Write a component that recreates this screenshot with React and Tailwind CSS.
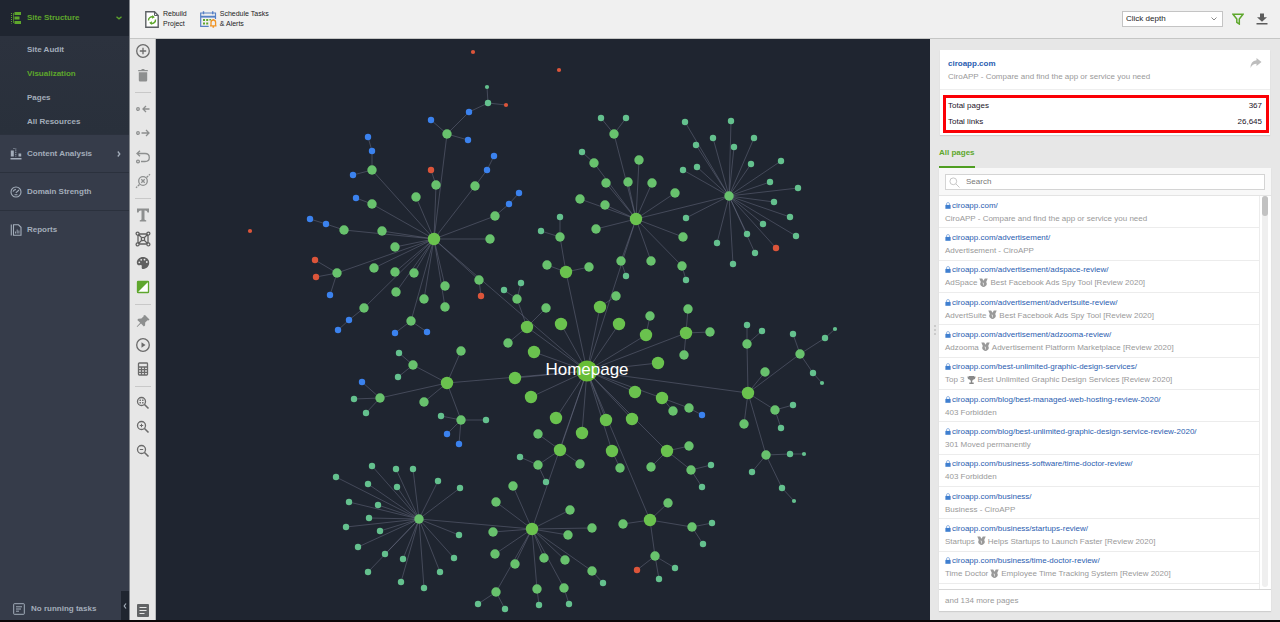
import { useMemo, useState } from 'react'

// kind -> radius and fill; h is the home node, 1-4 are click depths, b redirects, r errors
const KINDS = {
  h: { r: 10.5, fill: '#68bd37' },
  1: { r: 6.2, fill: '#6ac24e' },
  2: { r: 4.7, fill: '#68c26d' },
  3: { r: 3.2, fill: '#64c18e' },
  4: { r: 2.1, fill: '#64c18e' },
  b: { r: 3.2, fill: '#3b82ee' },
  r: { r: 3.2, fill: '#dc553a' },
  e: { r: 2.1, fill: '#dc553a' }
}

const n = (x, y, kind, ...children) => ({ x, y, kind, children })
const leaves = (kind, points) => points.map(([x, y]) => n(x, y, kind))

const siteTree = n(587, 371, 'h',
  ...leaves(1, [[534, 352], [515, 378], [531, 397], [561, 324], [556, 418], [582, 433], [619, 324], [658, 363], [635, 392], [632, 419], [606, 420]]),
  n(434, 239, 1,
    ...leaves(2, [[382, 231], [395, 247], [416, 197], [490, 239], [374, 268], [395, 272], [414, 273], [396, 292], [424, 299], [445, 286], [445, 307]]),
    n(447, 134, 2, n(431, 120, 'b'), n(468, 140, 'b'), n(469, 112, 'b', n(488, 103, 3, n(487, 87, 4), n(506, 105, 'e')))),
    n(372, 170, 2, n(372, 151, 'b', n(368, 137, 'b')), n(353, 175, 'b')),
    n(372, 204, 2, n(356, 198, 'b')),
    n(344, 230, 2, n(326, 224, 'b', n(310, 219, 'b'))),
    n(436, 185, 2, n(431, 170, 'r')),
    n(475, 186, 2, n(487, 170, 'b', n(494, 156, 'b'))),
    n(495, 216, 2, n(509, 204, 'b', n(519, 193, 'b'))),
    n(337, 273, 2, n(315, 260, 'r'), n(316, 277, 'r'), n(330, 295, 'b')),
    n(364, 308, 2, n(349, 320, 'b', n(338, 330, 'b'))),
    n(411, 321, 2, n(395, 333, 'b'), n(427, 332, 'b')),
    n(479, 280, 2, n(481, 296, 'r'))
  ),
  n(527, 327, 1, n(517, 299, 2, ...leaves(3, [[504, 290], [521, 283]])), n(546, 308, 2), n(508, 343, 2)),
  n(447, 383, 1,
    n(461, 351, 2),
    n(424, 402, 2),
    n(413, 365, 2, ...leaves(3, [[399, 353], [398, 377]])),
    n(380, 398, 2, n(362, 382, 'b'), ...leaves(3, [[354, 399], [366, 413]])),
    n(461, 420, 2, ...leaves(3, [[441, 416], [486, 420]]), n(447, 434, 'b'), n(459, 444, 'b'))
  ),
  n(636, 219, 1,
    ...leaves(2, [[639, 160], [606, 183], [628, 182], [652, 183], [675, 193], [580, 199], [605, 205], [596, 229], [683, 237], [651, 261]]),
    n(614, 134, 2, ...leaves(3, [[601, 118], [626, 118]])),
    n(594, 163, 2, n(582, 152, 3)),
    n(621, 261, 2, n(626, 276, 3)),
    n(682, 266, 2, n(686, 280, 3)),
    n(729, 196, 2,
      ...leaves(3, [[685, 122], [731, 121], [713, 138], [754, 138], [696, 145], [734, 147], [683, 170], [697, 167], [751, 164], [781, 161], [770, 182], [798, 188], [774, 202], [790, 217], [763, 224], [796, 236], [747, 234], [755, 253], [686, 218], [717, 243], [733, 264]]),
      n(776, 248, 'r')
    )
  ),
  n(566, 272, 1, n(547, 265, 2), n(589, 267, 2), n(560, 237, 2, ...leaves(3, [[560, 217], [541, 231]]))),
  n(600, 307, 1, n(616, 296, 2)),
  n(646, 335, 1, n(650, 316, 2)),
  n(686, 333, 1, ...leaves(2, [[688, 309], [710, 332], [684, 355]])),
  n(662, 398, 1, n(673, 411, 2), n(689, 408, 2, n(702, 415, 'b'))),
  n(612, 451, 1, n(620, 468, 2)),
  n(667, 451, 1, n(689, 446, 2), n(651, 467, 2), n(691, 470, 2, ...leaves(3, [[711, 465], [702, 487]]))),
  n(560, 450, 1, n(538, 434, 2), n(580, 464, 2), n(538, 465, 2, ...leaves(3, [[520, 457], [546, 482]]))),
  n(748, 393, 1,
    n(765, 372, 2),
    n(744, 424, 2),
    n(747, 344, 2, ...leaves(3, [[747, 325], [762, 331]])),
    n(800, 354, 2, n(793, 334, 3), n(825, 338, 3, n(835, 329, 4)), n(813, 373, 3, n(822, 383, 4))),
    n(775, 410, 2, ...leaves(3, [[793, 405], [781, 428]])),
    n(766, 455, 2, n(752, 472, 3), n(790, 454, 3, n(804, 454, 4)), n(782, 488, 3, n(794, 501, 4)))
  ),
  n(532, 529, 1,
    ...leaves(2, [[513, 486], [496, 502], [493, 532], [495, 554], [515, 564], [544, 558], [565, 560], [568, 535], [592, 528], [570, 510]]),
    n(592, 571, 2, n(603, 583, 3)),
    n(496, 592, 2, ...leaves(3, [[478, 604], [505, 609]])),
    n(537, 589, 2, n(539, 605, 3)),
    n(564, 588, 2, n(569, 604, 3)),
    n(419, 519, 2,
      ...leaves(3, [[372, 466], [396, 469], [413, 469], [336, 477], [368, 484], [397, 487], [438, 481], [460, 488], [349, 502], [378, 505], [369, 518], [346, 527], [380, 531], [358, 547], [385, 554], [403, 559], [368, 572], [401, 582], [424, 588], [440, 572], [454, 558], [459, 535]])
    )
  ),
  n(650, 520, 1,
    n(668, 503, 2),
    n(623, 524, 2),
    n(692, 527, 2, ...leaves(3, [[712, 523], [703, 544]])),
    n(655, 556, 2, n(637, 570, 'r'), ...leaves(3, [[659, 579], [675, 568]]))
  )
)

const orphans = leaves('e', [[473, 52], [559, 70], [250, 231]])

const pages = [
  { url: 'ciroapp.com/', title: ['CiroAPP - Compare and find the app or service you need'] },
  { url: 'ciroapp.com/advertisement/', title: ['Advertisement - CiroAPP'] },
  { url: 'ciroapp.com/advertisement/adspace-review/', title: ['AdSpace', 'Best Facebook Ads Spy Tool [Review 2020]'], icon: 'medal' },
  { url: 'ciroapp.com/advertisement/advertsuite-review/', title: ['AdvertSuite', 'Best Facebook Ads Spy Tool [Review 2020]'], icon: 'medal' },
  { url: 'ciroapp.com/advertisement/adzooma-review/', title: ['Adzooma', 'Advertisement Platform Marketplace [Review 2020]'], icon: 'medal' },
  { url: 'ciroapp.com/best-unlimited-graphic-design-services/', title: ['Top 3', 'Best Unlimited Graphic Design Services [Review 2020]'], icon: 'trophy' },
  { url: 'ciroapp.com/blog/best-managed-web-hosting-review-2020/', title: ['403 Forbidden'] },
  { url: 'ciroapp.com/blog/best-unlimited-graphic-design-service-review-2020/', title: ['301 Moved permanently'] },
  { url: 'ciroapp.com/business-software/time-doctor-review/', title: ['403 Forbidden'] },
  { url: 'ciroapp.com/business/', title: ['Business - CiroAPP'] },
  { url: 'ciroapp.com/business/startups-review/', title: ['Startups', 'Helps Startups to Launch Faster [Review 2020]'], icon: 'medal' },
  { url: 'ciroapp.com/business/time-doctor-review/', title: ['Time Doctor', 'Employee Time Tracking System [Review 2020]'], icon: 'medal' }
]

const flatten = (node, nodes = [], edges = []) => {
  nodes.push(node)
  node.children.forEach((child) => {
    edges.push([node, child])
    flatten(child, nodes, edges)
  })
  return { nodes, edges }
}

const Magnifier = ({ children }) => (
  <>
    <circle cx="6.5" cy="6.5" r="4" />
    <path d="M9.5 9.5l4 4" strokeWidth="1.6" />
    {children}
  </>
)

// every tool is drawn on a 16x16 grid with a currentColor stroke
const toolGroups = [
  [
    { label: 'Add page', tone: 'text-[#6b6b6b]', art: <><circle cx="8" cy="8" r="6.3" /><path d="M8 4.8v6.4M4.8 8h6.4" /></> },
    { label: 'Delete', tone: 'text-[#8d8f8f]', art: <path d="M3.200 4.300V2.900h3l.7-.9h2.200l.7.9h3v1.400zM3.800 5.300h8.400v8q0 1.200-1.200 1.200H5q-1.200 0-1.200-1.200z" fill="currentColor" stroke="none" /> }
  ],
  [
    { label: 'Incoming links', tone: 'text-[#8d8f8f]', art: <><circle cx="3" cy="8" r="1.300" /><path d="M14.500 8H8M11 5L8 8l3 3" /></> },
    { label: 'Outgoing links', tone: 'text-[#8d8f8f]', art: <><circle cx="3" cy="8" r="1.300" /><path d="M6.500 8H14M11 5l3 3-3 3" /></> },
    { label: 'Redirect link', tone: 'text-[#8d8f8f]', art: <><path d="M5 1.800L2 4.500l3 2.700M2.300 4.500h7.700q4.300 0 4.300 4t-4.300 4H6" /><circle cx="3" cy="12.500" r="1.400" /></> },
    { label: 'Break links', tone: 'text-[#8d8f8f]', art: <><circle cx="8" cy="8" r="4.300" /><path d="M6.300 6.300l3.400 3.400M9.700 6.300L6.300 9.700" /><path d="M11.500 4.500L15 1.200M4.500 11.500L1 14.800" strokeDasharray="2.300 .8" /></> }
  ],
  [
    { label: 'Titles', tone: 'text-[#8d8f8f]', art: <path d="M2 1.500h12v4h-1.500q-.3-2-2.300-2H9.500v8.700q0 1 1.700 1v1.300H4.800v-1.300q1.700 0 1.700-1V3.500h-.7q-2 0-2.300 2H2z" fill="currentColor" stroke="none" /> },
    { label: 'Layout', tone: 'text-[#606060]', art: <><path d="M3 3h10v10H3zM3 3l10 10M13 3L3 13" /><g fill="#e7e7e7"><circle cx="2.600" cy="2.600" r="1.500" /><circle cx="13.400" cy="2.600" r="1.500" /><circle cx="2.600" cy="13.400" r="1.500" /><circle cx="13.400" cy="13.400" r="1.500" /><circle cx="8" cy="8" r="1.700" /></g></> },
    { label: 'Colors', tone: 'text-[#606060]', art: <><path d="M8 2C4.500 2 1.800 4.500 1.800 7.500c0 2.500 1.700 3 3.200 2.700 1.700-.4 2 .3 1.700 1.800-.2 1.500.5 2.200 1.700 2 3.500-.5 5.800-3 5.800-6.300C14.200 4.300 11.500 2 8 2z" fill="currentColor" stroke="none" /><g fill="#e7e7e7" stroke="none"><circle cx="4.300" cy="7.300" r=".9" /><circle cx="6.200" cy="4.800" r=".9" /><circle cx="9.500" cy="4.600" r=".9" /><circle cx="11.800" cy="7" r=".9" /></g></> },
    { label: 'Background', tone: 'text-[#5ea62d]', art: <><rect x="2.500" y="2.500" width="11" height="11" rx=".6" fill="#fff" /><path d="M2.500 2.500h11l-11 11z" fill="currentColor" stroke="none" /></> }
  ],
  [
    { label: 'Pin', tone: 'text-[#8d8f8f]', art: <path d="M9.700 1.800l4.500 4.500-1 .8-.9-.2-2.400 2.300-.1 3-1.300 1-2.800-2.900-3.800 3.500-.5-.5 3.500-3.800L2 6.700l1-1.300 3.100-.1 2.300-2.300-.2-.7z" transform="translate(.3 .3)" fill="currentColor" stroke="none" /> },
    { label: 'Play', tone: 'text-[#6b6b6b]', art: <><circle cx="8" cy="8" r="6.300" /><path d="M6.500 5.300L10.500 8l-4 2.700z" fill="currentColor" stroke="none" /></> },
    { label: 'Calculate', tone: 'text-[#6b6b6b]', art: <><rect x="3.500" y="2" width="9" height="12" rx=".8" /><path d="M3.500 6h9M3.500 8.700h9M3.500 11.300h9M6.500 6v8M9.500 6v8" /></> }
  ],
  [
    { label: 'Fit to screen', tone: 'text-[#6b6b6b]', art: <Magnifier><g fill="currentColor" stroke="none"><path d="M4.500 4.500h1.400v1.400H4.500zM7.100 4.500h1.400v1.400H7.100zM4.500 7.100h1.400v1.400H4.500zM7.100 7.100h1.400v1.400H7.100z" /></g></Magnifier> },
    { label: 'Zoom in', tone: 'text-[#6b6b6b]', art: <Magnifier><path d="M6.500 4.800v3.400M4.800 6.500h3.400" strokeWidth="1" /></Magnifier> },
    { label: 'Zoom out', tone: 'text-[#6b6b6b]', art: <Magnifier><path d="M4.800 6.500h3.400" strokeWidth="1" /></Magnifier> }
  ]
]

const Medal = () => (
  <svg viewBox="0 0 9 10" className="mx-[2px] h-[10px] w-[9px] shrink-0 fill-[#999]" aria-hidden="true">
    <path d="M.3.600h2.900l1.300 2.200L5.800.600h2.900L7.200 3.900a3.200 3.200 0 1 1-5.400 0z" />
    <path d="M3.500 5h1v2.500" fill="none" stroke="#eee" strokeWidth=".7" />
  </svg>
)

const Trophy = () => (
  <svg viewBox="0 0 9 10" className="mx-[2px] h-[10px] w-[9px] shrink-0 fill-[#888]" aria-hidden="true">
    <path d="M2 1h5v.6h1.500c0 1.900-.6 2.800-2 3L5.200 5.800v1.800h1.500V9H2.300V7.600h1.500V5.800L2.500 4.600c-1.400-.2-2-1.100-2-3H2z" />
  </svg>
)

const Lock = () => (
  <svg viewBox="0 0 6 7" className="h-[7px] w-[6px] shrink-0" aria-hidden="true">
    <path d="M1.500 3V2a1.500 1.500 0 0 1 3 0v1" fill="none" stroke="#8eb2e2" strokeWidth=".9" />
    <rect x=".4" y="2.900" width="5.200" height="3.900" fill="#3f7fd0" />
  </svg>
)

function Sidebar() {
  const [active, setActive] = useState('Visualization')

  return (
    <aside className="flex w-[130px] shrink-0 flex-col border-r border-[#82868c] bg-[#363c4a] font-bold text-[#a3adba]">
      <nav className="flex flex-col">
        <button className="flex h-9 items-center bg-[#1f2530] pr-[7px] pl-[10px] text-[#5ea72c]">
          <svg viewBox="0 0 12 12" className="mr-[5px] size-3" fill="currentColor" aria-hidden="true">
            <path d="M1.500 1v10.500" stroke="currentColor" strokeDasharray="1 1" />
            <path d="M4.500 0H11v3H4.500zM4.500 4.500h5v3h-5zM4.500 9H11v3H4.500z" />
            <path d="M3.500 1v10" stroke="currentColor" strokeWidth=".7" />
          </svg>
          Site Structure
          <svg viewBox="0 0 6 4" className="ml-auto h-1 w-[6px]" fill="none" stroke="currentColor" strokeWidth="1.3" aria-hidden="true">
            <path d="M.5.8L3 2.800 5.500.8" />
          </svg>
        </button>
        <div className="flex flex-col bg-linear-to-b from-[#2c323e] to-[#29303b] pt-[2px]">
          {['Site Audit', 'Visualization', 'Pages', 'All Resources'].map((item) => (
            <button key={item} onClick={() => setActive(item)} className={`flex h-6 items-center pl-[27px] ${active === item ? 'text-[#5ea72c]' : ''}`}>
              {item}
            </button>
          ))}
        </div>
        <button className="flex h-[38px] items-center border-t border-[#2b313d] pr-2 pl-[10px]">
          <svg viewBox="0 0 12 12" className="mr-[5px] size-3" fill="currentColor" aria-hidden="true">
            <path d="M.8 2.500h3v6h-3zM8.500 5.500h2.700v3H8.500z" />
            <path d="M5.800.5v8M3.500.5h1" stroke="currentColor" strokeDasharray="1 .8" />
            <path d="M.5 10h11v1.500H.5z" />
          </svg>
          Content Analysis
          <svg viewBox="0 0 4 6" className="ml-auto h-[6px] w-1" fill="none" stroke="currentColor" strokeWidth="1.3" aria-hidden="true">
            <path d="M.8.500L2.800 3 .8 5.500" />
          </svg>
        </button>
        <button className="flex h-[38px] items-center border-t border-[#2b313d] pl-[10px]">
          <svg viewBox="0 0 12 12" className="mr-[5px] size-3" fill="none" stroke="currentColor" strokeWidth="1.1" aria-hidden="true">
            <circle cx="6" cy="6" r="5" />
            <path d="M3 5.500q1-2 3-2M5.800 6.800L9 4M4.500 8.800h3" />
          </svg>
          Domain Strength
        </button>
        <button className="flex h-[38px] items-center border-t border-[#2b313d] pl-[10px]">
          <svg viewBox="0 0 12 12" className="mr-[5px] size-3" fill="none" stroke="currentColor" strokeWidth="1.1" aria-hidden="true">
            <path d="M1.300.5v11M3.500.8h5l2.500 2.500v7.900H3.500z" />
            <path d="M5.500 9.500v-2M7.200 9.500v-4M8.900 9.500v-3" strokeWidth=".9" />
          </svg>
          Reports
        </button>
      </nav>
      <div className="mt-auto flex h-[29px] items-stretch">
        <button className="flex flex-1 items-center pt-[6px] pl-[13px]">
          <svg viewBox="0 0 12 12" className="mr-[6px] size-3" fill="none" stroke="currentColor" aria-hidden="true">
            <rect x=".7" y=".7" width="10.600" height="10.600" rx=".6" />
            <path d="M3 3.800h6M3 6h5M3 8.200h3" />
          </svg>
          No running tasks
        </button>
        <button aria-label="Collapse menu" className="flex w-2 items-center justify-center bg-[#1f2530]">
          <svg viewBox="0 0 4 6" className="h-[6px] w-1" fill="none" stroke="currentColor" strokeWidth="1.2" aria-hidden="true">
            <path d="M3 .5L1.200 3 3 5.500" />
          </svg>
        </button>
      </div>
    </aside>
  )
}

function Header() {
  return (
    <header className="flex h-[39px] shrink-0 items-center border-b border-[#c5c6c5] bg-[#f0f0f0] pr-3 pl-[15px] text-[#1c1c24]">
      <button className="flex items-center gap-1 text-left text-[7px] leading-[10px]">
        <svg viewBox="0 0 14 17" className="h-[17px] w-[14px]" fill="none" aria-hidden="true">
          <path d="M.8.800h8.700l3.700 3.700v11.700H.8z" fill="#fff" stroke="#5c6064" strokeWidth="1.400" />
          <path d="M9.500.800v3.700h3.700" stroke="#5c6064" />
          <path d="M3.500 9.500a3.500 3.500 0 0 1 4.700-3.500M10.500 8.500a3.500 3.500 0 0 1-4.700 3.700" stroke="#5ea72c" strokeWidth="1.400" />
          <path d="M7.300 4l2.500 2.300-2.800 1.500zM6.700 14L4.200 11.700 7 10.200z" fill="#5ea72c" />
        </svg>
        <span>Rebuild<br />Project</span>
      </button>
      <button className="ml-[13px] flex items-center gap-[3px] text-left text-[7px] leading-[10px]">
        <svg viewBox="0 0 17 17" className="size-[17px]" fill="none" aria-hidden="true">
          <path d="M.7 2h14.800v4H.7zM.7 6v9.300h8M15.500 6v2" stroke="#5580c4" strokeWidth="1.200" />
          <path d="M3.500.3v3M12.700.3v3M.7 5.500h14.800" stroke="#5580c4" strokeWidth="1.400" />
          <path d="M3 8h2v2H3zM6.200 8h2v2h-2zM9.400 8h1.500v1.500H9.400zM3 11.500h2v2H3zM6.200 11.500h2v2h-2z" fill="#5ea72c" />
          <path d="M10 14.800h6.500M11 14.500v-3q0-2.500 2.300-2.500t2.300 2.500v3M12.500 16h1.600M13.300 9V8" stroke="#f09424" strokeWidth="1.300" />
        </svg>
        <span>Schedule Tasks<br />&amp; Alerts</span>
      </button>
      <div className="relative ml-auto flex">
        <select aria-label="Node size" className="h-4 w-[101px] appearance-none border border-[#c4c4c4] bg-white px-[3px] text-[8px] leading-[12px] outline-none">
          <option>Click depth</option>
          <option>InLink Rank</option>
          <option>Pageviews</option>
        </select>
        <svg viewBox="0 0 6 4" className="pointer-events-none absolute top-[6px] right-[6px] h-1 w-[6px]" fill="none" stroke="#8a8a8a" aria-hidden="true">
          <path d="M.5.500L3 3 5.500.500" />
        </svg>
      </div>
      <button aria-label="Filter" className="ml-[9px]">
        <svg viewBox="0 0 12 12" className="size-3" fill="none" stroke="#5ea72c" strokeWidth="1.500" aria-hidden="true">
          <path d="M1 1.300h10L7.300 6v5L4.800 9.300V6z" />
        </svg>
      </button>
      <button aria-label="Download" className="ml-3">
        <svg viewBox="0 0 12 12" className="size-3" fill="#5c5c5c" aria-hidden="true">
          <path d="M4 .5h4v3.700h3L6 8.800 1 4.200h3zM.500 10h11v1.500H.5z" />
        </svg>
      </button>
    </header>
  )
}

function Toolbar() {
  return (
    <div className="flex w-[26px] shrink-0 flex-col items-center border-r border-[#b9babb] bg-[#e7e7e7]">
      {toolGroups.map((group, index) => (
        <div key={group[0].label} className="flex flex-col items-center">
          {index > 0 && <div className="flex h-[10px] items-center"><div className="h-px w-4 bg-[#c8c8c8]" /></div>}
          {group.map((tool) => (
            <button key={tool.label} aria-label={tool.label} className={`flex h-6 w-[26px] items-center justify-center ${tool.tone}`}>
              <svg viewBox="0 0 16 16" className="size-4" fill="none" stroke="currentColor" strokeWidth="1.300" aria-hidden="true">{tool.art}</svg>
            </button>
          ))}
        </div>
      ))}
      <button aria-label="Notes" className="mt-auto mb-[3px]">
        <svg viewBox="0 0 12 13" className="h-[13px] w-3" aria-hidden="true">
          <rect width="12" height="13" rx="1" fill="#626466" />
          <path d="M2.500 3.500h7M2.500 6.500h7M2.500 9.500h5" stroke="#e7e7e7" strokeWidth="1.200" />
        </svg>
      </button>
    </div>
  )
}

function SiteGraph() {
  const { nodes, edges } = useMemo(() => flatten(siteTree), [])

  return (
    <main className="min-w-0 flex-1 bg-[#1f2530]">
      <svg viewBox="156 39 774 581" className="size-full" role="img" aria-label="Site structure graph">
        <g stroke="#6d7287" strokeOpacity=".6" strokeWidth=".8">
          {edges.map(([from, to]) => (
            <line key={`${to.x}-${to.y}`} x1={from.x} y1={from.y} x2={to.x} y2={to.y} />
          ))}
        </g>
        {[...nodes, ...orphans].map((node) => (
          <circle key={`${node.x}-${node.y}`} cx={node.x} cy={node.y} r={KINDS[node.kind].r} fill={KINDS[node.kind].fill} />
        ))}
        <text x="587" y="375" textAnchor="middle" fontSize="17" fill="#fff">Homepage</text>
      </svg>
    </main>
  )
}

function PageRow({ page }) {
  return (
    <li className="flex max-h-9 flex-1 flex-col justify-center border-b border-[#ececec] pl-[6px]">
      <a href={`https://${page.url}`} className="flex items-center gap-px leading-[13px] text-[#2a5db0]">
        <Lock />
        {page.url}
      </a>
      <p className="flex items-center leading-[13px] text-[#999]">
        {page.title[0]}
        {page.icon === 'medal' && <Medal />}
        {page.icon === 'trophy' && <Trophy />}
        {page.title[1]}
      </p>
    </li>
  )
}

function DetailsPanel() {
  const [search, setSearch] = useState('')
  const visible = pages.filter((page) => page.url.includes(search.trim().toLowerCase()))

  return (
    <aside className="flex w-[350px] shrink-0 bg-[#e7e7e7]">
      <div className="flex w-[9px] flex-col items-center justify-center gap-[2px]">
        <i className="size-[2px] rounded-full bg-[#c2c2c2]" />
        <i className="size-[2px] rounded-full bg-[#c2c2c2]" />
        <i className="size-[2px] rounded-full bg-[#c2c2c2]" />
      </div>
      <div className="flex min-w-0 flex-1 flex-col pt-[11px] pr-[9px] pb-[9px]">
        <section className="mx-px bg-white shadow-[0_1px_1px_#cfcfcf]">
          <div className="flex h-10 items-start justify-between border-b border-[#eee] pt-[7px] pr-2 pl-2">
            <div className="leading-[13px]">
              <a href="https://ciroapp.com" className="font-bold text-[#2a5db0]">ciroapp.com</a>
              <p className="text-[#999]">CiroAPP - Compare and find the app or service you need</p>
            </div>
            <button aria-label="Open page">
              <svg viewBox="0 0 12 12" className="size-3" fill="#bdbdbd" aria-hidden="true">
                <path d="M6.500 1L11.500 5l-5 4V6.800Q2.500 6.800.5 11 .5 4 6.500 3.300z" />
              </svg>
            </button>
          </div>
          <div className="pt-[5px] pr-px pb-[2px] pl-[3px]">
            <dl className="grid grid-cols-[1fr_auto] border-[3px] border-[#fb0005] pr-1 pl-[2px] leading-4 text-[#1c1428]">
              <dt>Total pages</dt>
              <dd className="text-right">367</dd>
              <dt>Total links</dt>
              <dd className="text-right">26,645</dd>
            </dl>
          </div>
        </section>
        <div className="mt-[9px] flex">
          <button className="flex h-6 items-start border-b-2 border-[#4f9e22] pt-[3px] leading-[12px] font-bold text-[#5ea72c]">All pages</button>
        </div>
        <section className="flex min-h-0 flex-1 flex-col bg-white shadow-[0_1px_1px_#cfcfcf]">
          <div className="border-b border-[#e4e4e4] bg-[#f8f8f8] px-[6px] pt-[6px] pb-[5px]">
            <label className="flex h-4 items-center border border-[#d4d4d4] bg-white pl-[3px]">
              <svg viewBox="0 0 12 12" className="size-[11px]" fill="none" stroke="#c2c2c2" aria-hidden="true">
                <circle cx="4.700" cy="4.700" r="3.700" />
                <path d="M7.500 7.500l4 4" />
              </svg>
              <input aria-label="Search pages" value={search} onChange={(event) => setSearch(event.target.value)} placeholder="Search" className="min-w-0 flex-1 pl-[6px] text-[8px] leading-[12px] outline-none placeholder:text-[#777]" />
            </label>
          </div>
          <div className="flex min-h-0 flex-1">
            <ul className="mr-[2px] flex min-w-0 flex-1 flex-col border-r border-[#ececec] pb-[5px]">
              {visible.map((page) => <PageRow key={page.url} page={page} />)}
            </ul>
            <div className="mr-[3px] mb-[2px] w-[6px] rounded-full bg-[#efefef]">
              <div className="h-5 rounded-full bg-[#c2c2c2]" />
            </div>
          </div>
          <p className="flex h-[22px] items-center border-t border-[#d6d6d6] pt-px pl-[6px] text-[#999]">and 134 more pages</p>
        </section>
      </div>
    </aside>
  )
}

export default function App() {
  return (
    <div className="flex h-screen overflow-hidden border-b-2 border-[#0b0608] font-['Liberation_Sans',Arial,sans-serif] text-[8px] leading-[12px]">
      <Sidebar />
      <div className="flex min-w-0 flex-1 flex-col">
        <Header />
        <div className="flex min-h-0 flex-1">
          <Toolbar />
          <SiteGraph />
          <DetailsPanel />
        </div>
      </div>
    </div>
  )
}
